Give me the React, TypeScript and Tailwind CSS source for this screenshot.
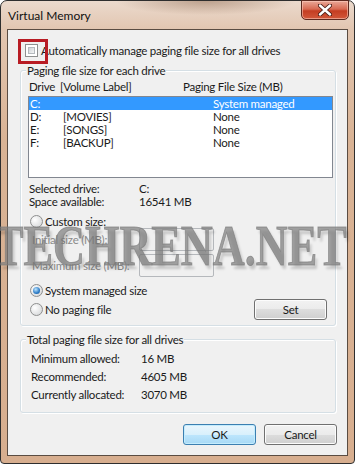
import type { ReactNode } from 'react';

const drives = [
  { drive: 'C:', label: '', size: 'System managed', selected: true },
  { drive: 'D:', label: '[MOVIES]', size: 'None', selected: false },
  { drive: 'E:', label: '[SONGS]', size: 'None', selected: false },
  { drive: 'F:', label: '[BACKUP]', size: 'None', selected: false },
];

function Checkbox() {
  return (
    <span className="relative block w-[13px] h-[13px] border border-[#8e8f8f] bg-white p-[2px]">
      <span className="block w-full h-full border border-[#b4b9be] bg-[linear-gradient(135deg,#cdd1d6,#f4f4f4)]" />
      {/* red annotation box */}
      <span className="absolute left-[-8px] top-[-6px] w-[30px] h-[25px] border-[3px] border-[#b81c24]" />
    </span>
  );
}

function Radio({ checked }: { checked?: boolean }) {
  return (
    <span className="flex items-center justify-center w-[13px] h-[13px] rounded-full border border-[#8e8f8f] bg-[radial-gradient(circle_at_35%_35%,#ffffff,#cfd1d3)]">
      {checked && (
        <span className="block w-[7px] h-[7px] rounded-full bg-[radial-gradient(circle_at_40%_35%,#bfe6ff,#2b7bc6_60%,#0f4f8e)]" />
      )}
    </span>
  );
}

function WinButton({ children, primary }: { children: ReactNode; primary?: boolean }) {
  return (
    <div
      className={
        primary
          ? 'flex items-center justify-center w-[73px] h-[21px] rounded-[3px] border border-[#3c7fb1] shadow-[inset_0_0_0_1px_#c4ecfd] bg-[linear-gradient(180deg,#eaf6fd_0%,#d9f0fc_50%,#bee6fd_50%,#a7d9f5_100%)]'
          : 'flex items-center justify-center w-[73px] h-[21px] rounded-[3px] border border-[#707070] shadow-[inset_0_0_0_1px_#fcfcfc] bg-[linear-gradient(180deg,#f2f2f2_0%,#ebebeb_50%,#dddddd_50%,#cfcfcf_100%)]'
      }
    >
      {children}
    </div>
  );
}

function Group({ label, className, children }: { label: string; className: string; children: ReactNode }) {
  return (
    <div
      className={
        'relative ml-[12px] w-[316px] rounded-[3px] border border-[#d5dfe5] shadow-[inset_1px_1px_0_#ffffff,1px_1px_0_#ffffff] ' +
        className
      }
    >
      <span className="absolute left-[5px] top-[-7px] px-[1px] bg-[#f0f0f0] leading-[13px]">{label}</span>
      {children}
    </div>
  );
}

export default function App() {
  return (
    <div className="relative w-[355px] h-[464px] overflow-hidden bg-white">
      <div className="flex flex-col w-[355px] h-[464px] border border-[#2e2e2e] rounded-t-[7px] rounded-b-[4px] bg-[linear-gradient(180deg,#ebdacd_0%,#e2c6b1_6%,#d9b395_30%,#d7ae8f_100%)] [font-family:Lato,sans-serif] text-[11.5px] tracking-[-0.25px] text-[#1a1a1a]">
        {/* Title bar */}
        <div className="flex h-[28px] items-start justify-between bg-[radial-gradient(ellipse_90px_14px_at_58%_0%,rgba(150,115,90,0.55),transparent)]">
          <span className="pl-[7px] pt-[8px] text-[12px] tracking-normal leading-[14px] text-[#111]">Virtual Memory</span>
          <div className="mt-[-1px] mr-[5px] flex items-center justify-center w-[48px] h-[20px] rounded-b-[5px] border border-[#5e2a20] shadow-[inset_0_0_0_1px_rgba(255,210,195,0.55)] bg-[linear-gradient(180deg,#eaa897_0%,#d86a52_45%,#c43d22_55%,#d2583a_100%)]">
            <svg width="14" height="12" viewBox="0 0 14 12">
              <path d="M2 1.5 L12 10.5 M12 1.5 L2 10.5" stroke="#4a1d15" strokeWidth="4.2" strokeLinecap="round" />
              <path d="M2 1.5 L12 10.5 M12 1.5 L2 10.5" stroke="#ffffff" strokeWidth="2.4" strokeLinecap="round" />
            </svg>
          </div>
        </div>

        {/* Client area */}
        <div className="flex flex-col flex-1 mx-[6px] mb-[7px] border border-[#5a4c42] bg-[#f0f0f0]">
          <div className="mt-[14px] ml-[17px] flex items-center gap-[3px] h-[13px] leading-[13px]">
            <Checkbox />
            <span>Automatically manage paging file size for all drives</span>
          </div>

          <Group label="Paging file size for each drive" className="mt-[13px] h-[256px] pt-[9px] pl-[7px]">
            <div className="grid grid-cols-[31px_123px_1fr] pl-[1px] h-[13px] leading-[13px]">
              <span>Drive</span>
              <span>[Volume Label]</span>
              <span>Paging File Size (MB)</span>
            </div>
            <div className="mt-[3px] w-[305px] h-[82px] border border-[#828790] bg-white">
              {drives.map((d) => (
                <div
                  key={d.drive}
                  className={
                    'grid grid-cols-[33px_150px_1fr] pl-[1px] h-[13px] leading-[13px] ' +
                    (d.selected ? 'bg-[#3399ff] text-white' : '')
                  }
                >
                  <span>{d.drive}</span>
                  <span>{d.label}</span>
                  <span>{d.size}</span>
                </div>
              ))}
            </div>

            <div className="mt-[4px] grid grid-cols-[110px_1fr] pl-[1px] leading-[13px]">
              <span>Selected drive:</span>
              <span>C:</span>
              <span>Space available:</span>
              <span>16541 MB</span>
            </div>

            <div className="mt-[7px] pl-[2px] flex items-center gap-[2px] h-[13px] leading-[13px]">
              <Radio />
              <span>Custom size:</span>
            </div>
            <div className="grid grid-cols-[111px_75px] items-center h-[23px] text-[#8a8a8a]">
              <span className="pl-[4px]">Initial size (MB):</span>
              <span className="block h-[23px] rounded-[2px] border border-[#b5b8bc]" />
            </div>
            <div className="mt-[3px] grid grid-cols-[111px_75px] items-center h-[23px] text-[#8a8a8a]">
              <span className="pl-[4px]">Maximum size (MB):</span>
              <span className="block h-[23px] rounded-[2px] border border-[#b5b8bc]" />
            </div>

            <div className="mt-[7px] pl-[2px] flex items-center gap-[2px] h-[13px] leading-[13px]">
              <Radio checked />
              <span>System managed size</span>
            </div>
            <div className="mt-[2px] pl-[2px] pr-[8px] flex items-center justify-between h-[21px]">
              <div className="flex items-center gap-[2px] leading-[13px]">
                <Radio />
                <span>No paging file</span>
              </div>
              <WinButton>Set</WinButton>
            </div>
          </Group>

          <Group label="Total paging file size for all drives" className="mt-[13px] h-[74px] pt-[12px] pl-[10px]">
            <div className="grid grid-cols-[110px_1fr] gap-y-[5px] leading-[13px]">
              <span>Minimum allowed:</span>
              <span>16 MB</span>
              <span>Recommended:</span>
              <span>4605 MB</span>
              <span>Currently allocated:</span>
              <span>3070 MB</span>
            </div>
          </Group>

          <div className="mt-[11px] pr-[10px] flex justify-end gap-[8px]">
            <WinButton primary>OK</WinButton>
            <WinButton>Cancel</WinButton>
          </div>
        </div>
      </div>

      {/* watermark */}
      <div className="absolute left-[-6px] top-[218px] origin-left scale-x-[0.79] whitespace-nowrap [font-family:'Liberation_Serif',serif] font-bold text-[56px] leading-[56px] text-[rgba(125,125,125,0.7)] [-webkit-text-stroke:1px_rgba(125,125,125,0.7)] [text-shadow:3px_4px_3px_rgba(0,0,0,0.18)] pointer-events-none">
        TECHRENA.NET
      </div>
    </div>
  );
}
